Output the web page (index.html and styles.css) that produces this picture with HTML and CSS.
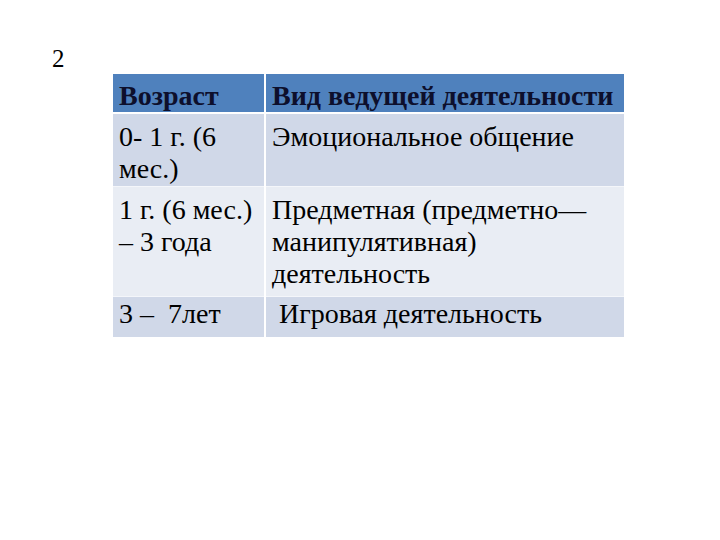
FILE: index.html
```html
<!DOCTYPE html>
<html lang="ru">
<head>
<meta charset="utf-8">
<link rel="stylesheet" href="styles.css">
</head>
<body>
<div class="page">
  <div class="num">2</div>
  <table class="grid">
    <colgroup><col class="c1"><col class="c2"></colgroup>
    <thead>
      <tr><th class="left">Возраст</th><th>Вид ведущей деятельности</th></tr>
    </thead>
    <tbody>
      <tr class="r1"><td class="left">0- 1 г. (6<br>мес.)</td><td>Эмоциональное общение</td></tr>
      <tr class="r2"><td class="left">1 г. (6 мес.)<br>– 3 года</td><td>Предметная (предметно—<br>манипулятивная)<br>деятельность</td></tr>
      <tr class="r3"><td class="left">3 –&nbsp; 7лет</td><td>&nbsp;Игровая деятельность</td></tr>
    </tbody>
  </table>
</div>
</body>
</html>
```

FILE: styles.css
```css
html, body {
  margin: 0;
  padding: 0;
  background: #ffffff;
}
.page {
  width: 720px;
  height: 540px;
  font-family: "Liberation Serif", "Times New Roman", serif;
  color: #000;
}
.num {
  padding: 44px 0 0 52px;
  font-size: 25px;
  line-height: 29px;
}
.grid {
  margin: 1px 0 0 113px;
  border-collapse: collapse;
  table-layout: fixed;
  width: 511px;
  font-size: 28px;
  line-height: 32px;
}
.c1 { width: 152px; }
.c2 { width: 359px; }
.grid th, .grid td {
  text-align: left;
  vertical-align: top;
  white-space: nowrap;
  padding: 0 4px 0 6px;
  border: none;
}
.grid .left { border-right: 2px solid #ffffff; }
.grid th {
  background: #4f81bd;
  font-weight: bold;
  color: #0d0f2c;
  padding-top: 6px;
  padding-bottom: 0;
  border-bottom: 2px solid #ffffff;
}
.grid .r1 td {
  background: #d0d8e8;
  padding-top: 7px;
  padding-bottom: 1px;
  border-bottom: 1px solid #f4f6fa;
}
.grid .r2 td {
  background: #e9edf4;
  padding-top: 7px;
  padding-bottom: 6px;
  border-bottom: 1px solid #f4f6fa;
}
.grid .r3 td {
  background: #d0d8e8;
  padding-top: 1px;
  padding-bottom: 7px;
}
```
